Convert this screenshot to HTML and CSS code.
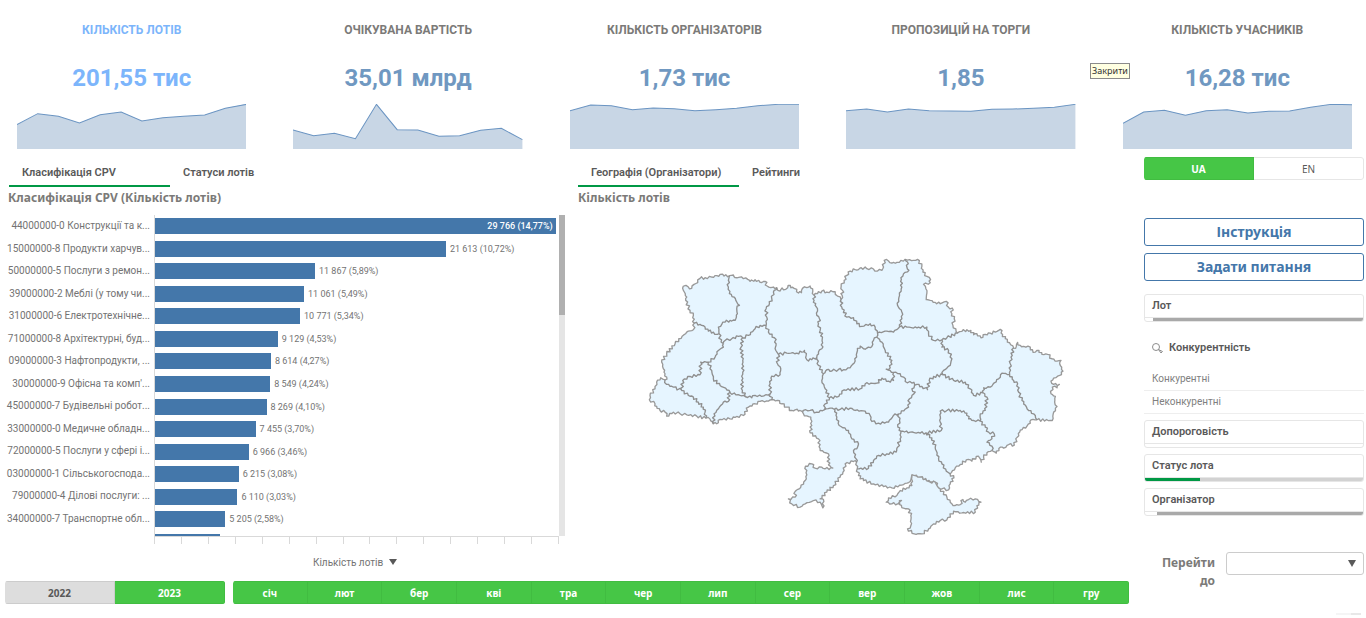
FILE: index.html
```
<!DOCTYPE html>
<html lang="uk">
<head>
    <meta charset="UTF-8">
    <meta name="viewport" content="width=device-width, initial-scale=1.0">
    <title>Аналітика закупівель</title>
    <link rel="stylesheet" href="styles.css">
</head>

<body>

<!-- Section: KPI cards -->
<header class="kpis">
    <section class="kpi active">
        <h2>КІЛЬКІСТЬ ЛОТІВ</h2>
        <p class="kpi-value">201,55 тис</p>
        <svg class="spark" viewBox="0 0 687 135" preserveAspectRatio="none" aria-hidden="true">
            <path class="area" d="M0 62L62 29L124 37L187 57L249 32L312 24L374 51L437 41L499 37L562 33L624 13L687 0V135H0Z"/>
            <path class="line" d="M0 62L62 29L124 37L187 57L249 32L312 24L374 51L437 41L499 37L562 33L624 13L687 1"/>
        </svg>
    </section>
    <section class="kpi">
        <h2>ОЧІКУВАНА ВАРТІСТЬ</h2>
        <p class="kpi-value">35,01 млрд</p>
        <svg class="spark" viewBox="0 0 687 135" preserveAspectRatio="none" aria-hidden="true">
            <path class="area" d="M0 78L62 95L124 88L187 104L250 1L312 77L374 78L437 97L499 95L562 79L624 73L687 107V135H0Z"/>
            <path class="line" d="M0 78L62 95L124 88L187 104L250 1L312 77L374 78L437 97L499 95L562 79L624 73L687 107"/>
        </svg>
    </section>
    <section class="kpi">
        <h2>КІЛЬКІСТЬ ОРГАНІЗАТОРІВ</h2>
        <p class="kpi-value">1,73 тис</p>
        <svg class="spark" viewBox="0 0 687 135" preserveAspectRatio="none" aria-hidden="true">
            <path class="area" d="M0 20L62 3L124 5L187 17L249 12L312 14L374 20L437 17L499 13L562 5L624 1L687 1V135H0Z"/>
            <path class="line" d="M0 20L62 3L124 5L187 17L249 12L312 14L374 20L437 17L499 13L562 5L624 1L687 1"/>
        </svg>
    </section>
    <section class="kpi">
        <h2>ПРОПОЗИЦІЙ НА ТОРГИ</h2>
        <p class="kpi-value">1,85</p>
        <svg class="spark" viewBox="0 0 687 135" preserveAspectRatio="none" aria-hidden="true">
            <path class="area" d="M0 20L62 15L124 24L187 15L249 20L312 21L374 22L437 16L499 15L562 13L624 10L687 1V135H0Z"/>
            <path class="line" d="M0 20L62 15L124 24L187 15L249 20L312 21L374 22L437 16L499 15L562 13L624 10L687 1"/>
        </svg>
    </section>
    <section class="kpi">
        <h2>КІЛЬКІСТЬ УЧАСНИКІВ</h2>
        <p class="kpi-value">16,28 тис</p>
        <svg class="spark" viewBox="0 0 687 135" preserveAspectRatio="none" aria-hidden="true">
            <path class="area" d="M0 58L62 24L124 19L187 34L249 20L312 17L374 27L437 22L499 21L562 10L624 1L687 2V135H0Z"/>
            <path class="line" d="M0 58L62 24L124 19L187 34L249 20L312 17L374 27L437 22L499 21L562 10L624 1L687 2"/>
        </svg>
    </section>
    <span class="tooltip" role="tooltip">Закрити</span>
</header>

<div class="layout">
    <main>
        <div class="panels">
            <!-- Section: CPV bar chart -->
            <section class="panel">
                <nav class="tabs">
                    <button class="tab selected" type="button">Класифікація CPV</button>
                    <button class="tab" type="button">Статуси лотів</button>
                </nav>
                <h3>Класифікація CPV (Кількість лотів)</h3>
                <div class="chart">
                    <ul class="bars">
                        <li><span class="name">44000000-0 Конструкції та к...</span><span class="track"><span class="bar" style="width: 99.2%"><b>29 766 (14,77%)</b></span></span></li>
                        <li><span class="name">15000000-8 Продукти харчув...</span><span class="track"><span class="bar" style="width: 72%"></span><span class="num">21 613 (10,72%)</span></span></li>
                        <li><span class="name">50000000-5 Послуги з ремон...</span><span class="track"><span class="bar" style="width: 39.6%"></span><span class="num">11 867 (5,89%)</span></span></li>
                        <li><span class="name">39000000-2 Меблі (у тому чи...</span><span class="track"><span class="bar" style="width: 36.9%"></span><span class="num">11 061 (5,49%)</span></span></li>
                        <li><span class="name">31000000-6 Електротехнічне...</span><span class="track"><span class="bar" style="width: 35.9%"></span><span class="num">10 771 (5,34%)</span></span></li>
                        <li><span class="name">71000000-8 Архітектурні, буд...</span><span class="track"><span class="bar" style="width: 30.4%"></span><span class="num">9 129 (4,53%)</span></span></li>
                        <li><span class="name">09000000-3 Нафтопродукти, ...</span><span class="track"><span class="bar" style="width: 28.7%"></span><span class="num">8 614 (4,27%)</span></span></li>
                        <li><span class="name">30000000-9 Офісна та комп'...</span><span class="track"><span class="bar" style="width: 28.5%"></span><span class="num">8 549 (4,24%)</span></span></li>
                        <li><span class="name">45000000-7 Будівельні робот...</span><span class="track"><span class="bar" style="width: 27.6%"></span><span class="num">8 269 (4,10%)</span></span></li>
                        <li><span class="name">33000000-0 Медичне обладн...</span><span class="track"><span class="bar" style="width: 24.9%"></span><span class="num">7 455 (3,70%)</span></span></li>
                        <li><span class="name">72000000-5 Послуги у сфері і...</span><span class="track"><span class="bar" style="width: 23.2%"></span><span class="num">6 966 (3,46%)</span></span></li>
                        <li><span class="name">03000000-1 Сільськогоспода...</span><span class="track"><span class="bar" style="width: 20.7%"></span><span class="num">6 215 (3,08%)</span></span></li>
                        <li><span class="name">79000000-4 Ділові послуги: ...</span><span class="track"><span class="bar" style="width: 20.4%"></span><span class="num">6 110 (3,03%)</span></span></li>
                        <li><span class="name">34000000-7 Транспортне обл...</span><span class="track"><span class="bar" style="width: 17.4%"></span><span class="num">5 205 (2,58%)</span></span></li>
                        <li><span class="name"></span><span class="track"><span class="bar" style="width: 16%"></span></span></li>
                    </ul>
                    <div class="scrollbar"><div class="thumb"></div></div>
                </div>
                <div class="ticks">
                    <i></i><i></i><i></i><i></i><i></i><i></i><i></i><i></i><i></i><i></i><i></i><i></i><i></i><i></i><i></i>
                </div>
                <button class="measure" type="button">Кількість лотів
                    <svg width="8" height="6" viewBox="0 0 8 6" aria-hidden="true"><path d="M0 0H8L4 6Z"/></svg>
                </button>
            </section>

            <!-- Section: map of regions -->
            <section class="panel">
                <nav class="tabs">
                    <button class="tab selected" type="button">Географія (Організатори)</button>
                    <button class="tab" type="button">Рейтинги</button>
                </nav>
                <h3>Кількість лотів</h3>
                <svg class="map" viewBox="0 0 1280 880" role="img" aria-label="Карта областей">
                    <!-- mainland -->
                    <path class="land" d="M130 117L138 115L145 120L155 124L162 112L173 107L180 94L195 92L215 90L230 86L240 82L252 87L268 86L280 84L285 92L296 91L310 95L323 97L330 103L345 98L360 106L375 103L381 117L392 122L400 120L410 122L413 130L420 132L426 123L437 127L444 115L452 122L462 124L470 127L475 138L484 137L487 124L500 122L510 117L518 132L522 145L532 140L545 132L560 135L572 131L585 134L592 147L603 157L606 145L607 130L603 118L612 100L620 85L630 72L645 68L655 68L663 62L680 65L700 66L712 72L725 70L730 60L732 40L745 42L755 48L770 46L782 40L795 37L808 38L820 40L832 37L845 58L848 75L860 88L871 98L870 107L850 112L857 125L860 138L858 158L870 160L885 166L900 170L918 163L924 180L936 183L935 200L942 215L938 235L952 258L965 253L980 248L992 250L1000 263L1010 260L1022 272L1035 262L1050 258L1065 255L1080 247L1087 262L1095 275L1108 287L1120 303L1128 298L1132 286L1140 295L1150 298L1163 297L1170 308L1185 315L1196 310L1205 322L1222 322L1235 335L1250 342L1262 340L1258 350L1268 372L1258 385L1240 393L1232 402L1240 412L1257 412L1250 422L1236 420L1232 440L1245 448L1243 465L1250 478L1240 495L1236 520L1190 518L1172 518L1170 528L1160 537L1140 549L1131 570L1122 594L1106 592L1090 603L1080 600L1068 618L1055 610L1040 617L1030 630L1023 645L1018 632L1008 628L995 642L990 638L978 638L960 652L945 662L930 680L941 692L930 710L925 728L905 725L895 722L885 705L870 705L840 690L815 683L810 703L790 712L755 722L730 718L700 710L670 700L655 685L651 665L649 645L640 643L615 650L612 670L600 690L580 715L560 735L540 755L550 757L548 782L540 765L520 760L495 770L480 780L455 770L445 755L465 750L465 733L482 720L495 700L500 683L496 657L515 650L525 663L545 660L555 665L578 663L565 653L565 620L540 610L535 575L510 557L515 535L512 510L500 506L490 500L490 490L475 492L465 488L455 490L440 480L425 470L412 460L395 458L385 462L360 463L345 470L325 480L310 505L290 508L270 515L240 517L230 530L220 530L210 516L197 513L170 507L140 503L120 500L100 495L80 507L75 495L60 490L50 478L45 470L28 458L30 445L45 425L50 405L62 392L75 398L80 390L75 380L70 365L65 345L80 320L105 290L140 255L160 248L163 228L158 212L160 205L150 190L137 160L140 150L130 130L130 117"/>
                    <!-- Crimea -->
                    <path class="land" d="M815 683L840 690L870 705L885 705L895 722L900 725L920 750L935 770L945 775L960 772L968 757L975 765L985 757L1005 755L1022 765L1010 775L1005 795L965 797L940 792L920 818L900 820L880 830L865 845L845 860L822 860L802 845L812 835L812 805L805 785L790 783L775 768L784 760L772 770L755 770L738 765L745 752L770 745L780 730L800 722L815 715L815 683"/>
                    <!-- region borders -->
                    <path class="border" d="M268 86L265 100L265 120L268 140L282 150L290 165L298 175L290 185L292 200L285 220L270 220L255 225L245 232L235 240L237 260
                        M163 228L180 232L195 240L205 252L220 255L232 262L237 260L243 285L250 290
                        M250 290L255 280L275 275L295 268L308 272L325 265L345 245L360 235L378 236
                        M410 122L400 135L395 155L388 170L378 185L380 210L378 236L385 255L403 272L408 290L405 305L415 322
                        M415 322L440 318L470 318L485 315L493 310L498 325L500 338L515 338L530 330
                        M522 145L522 160L525 175L532 185L530 205L538 215L535 230L540 250L547 270L545 305L535 315L530 330L535 355L550 380L545 400L555 425L568 452
                        M550 380L560 368L575 372L595 367L610 368L630 362L645 342L652 310L660 297L670 305L680 303L695 298L700 280L710 270
                        M603 157L605 180L620 210L640 212L650 230L665 238L690 230L705 240L712 258L710 270
                        M795 37L802 45L800 60L806 70L790 80L782 92L785 120L778 145L772 175L785 195L785 215L778 240
                        M712 258L740 252L760 255L778 240L800 240L820 243L835 240L860 240L865 260L880 280L905 278L920 272L952 258
                        M905 278L905 300L925 310L935 335L930 355L910 370L908 383
                        M710 270L725 285L735 310L755 340L750 362L738 366L760 376
                        M568 452L590 450L605 440L612 428L660 425L675 410L710 408L725 393L745 402L760 400L760 376
                        M760 376L780 380L790 390L795 403L815 408L830 412L845 418L862 428L867 400L880 388L908 383
                        M568 452L555 470L552 488L570 483L600 487L630 483L645 490L675 492L690 505L695 523L715 528L745 525L760 505L775 500
                        M490 490L510 490L530 495L552 488
                        M775 500L805 480L808 455L825 435L815 425L830 412
                        M775 500L778 520L773 540L782 552L780 575L772 600L768 615L740 620L715 625L700 640L685 663L651 665
                        M585 487L590 510L597 535L625 550L635 575L655 590L650 605L640 610L648 635L649 645
                        M782 552L810 555L840 558L857 557L903 550L900 525L900 492L920 490L960 490L980 498L985 515L1000 520L1020 522
                        M857 557L875 572L885 600L895 635L905 650L918 672L930 680
                        M908 383L940 400L975 405L990 425L1000 445L1028 437L1040 450L1035 490L1020 500L1020 522
                        M1028 437L1030 422L1050 420L1075 395L1085 378L1108 382
                        M1120 303L1112 330L1110 350L1108 382L1120 400L1132 410L1135 435L1145 460L1165 490L1180 500L1190 518
                        M1020 522L1035 540L1045 555L1062 560L1055 575L1040 585L1055 597L1055 610
                        M75 398L80 412L100 420L125 430L128 400L150 388L180 383L182 345L205 345L225 330L235 310L250 300L250 290
                        M125 430L145 445L160 450L175 465L190 480L195 495L197 513
                        M205 345L215 370L220 395L240 415L267 430L265 463L250 465L235 485L222 500L220 530
                        M267 430L270 437L300 445L315 447L335 452L345 445L365 448L390 440L395 458
                        M308 272L303 300L308 340L308 375L305 400L307 430L318 450
                        M415 322L412 350L422 365L420 383L395 387L390 410L390 440"/>
                </svg>
            </section>
        </div>

        <!-- Section: period filters -->
        <div class="period">
            <div class="group years">
                <button class="off" type="button">2022</button>
                <button type="button">2023</button>
            </div>
            <div class="group months">
                <button type="button">січ</button>
                <button type="button">лют</button>
                <button type="button">бер</button>
                <button type="button">кві</button>
                <button type="button">тра</button>
                <button type="button">чер</button>
                <button type="button">лип</button>
                <button type="button">сер</button>
                <button type="button">вер</button>
                <button type="button">жов</button>
                <button type="button">лис</button>
                <button type="button">гру</button>
            </div>
        </div>
    </main>

    <!-- Section: filters -->
    <aside>
        <div class="group lang">
            <button type="button">UA</button>
            <button class="plain" type="button">EN</button>
        </div>
        <div class="links">
            <a href="#">Інструкція</a>
            <a href="#">Задати питання</a>
        </div>
        <button class="filter" type="button">Лот<span class="state"><span class="excluded" style="width: 96.5%"></span></span></button>
        <div class="listbox">
            <h4>
                <svg width="11" height="11" viewBox="0 0 11 11" aria-hidden="true"><circle cx="4" cy="4" r="3.5"/><path d="M6.5 6.5L9 10L10.5 8.5Z"/></svg>
                Конкурентність
            </h4>
            <ul>
                <li>Конкурентні</li>
                <li>Неконкурентні</li>
            </ul>
        </div>
        <div class="filters">
            <button class="filter" type="button">Допороговість<span class="state"></span></button>
            <button class="filter" type="button">Статус лота<span class="state possible"><span class="chosen" style="width: 25%"></span></span></button>
            <button class="filter" type="button">Організатор<span class="state"><span class="excluded" style="width: 94.5%"></span></span></button>
        </div>
        <div class="goto">
            <label for="goto">Перейти до</label>
            <div class="select">
                <select id="goto"><option></option></select>
                <svg width="8" height="7" viewBox="0 0 8 7" aria-hidden="true"><path d="M0 0H8L4 7Z"/></svg>
            </div>
        </div>
        <div class="handle"></div>
    </aside>
</div>

<script>
    // Split every border segment into short steps and nudge them sideways,
    // so that the borders look like surveyed lines
    function roughen(line) {
        const points = line.trim().split('L').map(p => p.trim().split(' ').map(Number));
        let d = 'M' + points[0].join(' ');
        for (let i = 1; i < points.length; i++) {
            const [x1, y1] = points[i - 1];
            const [x2, y2] = points[i];
            const length = Math.hypot(x2 - x1, y2 - y1);
            const steps = Math.max(1, Math.round(length / 6));
            for (let s = 1; s < steps; s++) {
                const t = s / steps;
                const shift = Math.sin((x1 * 13 + y1 * 7 + s * 29) * 12.9) * 4;
                const x = x1 + (x2 - x1) * t - (y2 - y1) / length * shift;
                const y = y1 + (y2 - y1) * t + (x2 - x1) / length * shift;
                d += `L${x.toFixed(1)} ${y.toFixed(1)}`;
            }
            d += `L${x2} ${y2}`;
        }
        return d;
    }

    document.querySelectorAll('.map path').forEach(path => {
        const lines = path.getAttribute('d').split('M').slice(1);
        path.setAttribute('d', lines.map(roughen).join(''));
    });
</script>

</body>
</html>
```
FILE: styles.css
```
* {
    box-sizing: border-box;
}

body {
    font-family: "Noto Sans", "Open Sans", sans-serif;
    font-size: 11px;
    margin: 0;
    background-color: white;
    color: #595959;
}

h2, h3, h4, p, ul {
    margin: 0;
    padding: 0;
}

ul {
    list-style: none;
}

button, select {
    font-family: inherit;
    font-size: inherit;
    color: inherit;
    cursor: pointer;
}

/* KPI cards */
.kpis {
    position: relative;
    display: grid;
    grid-template-columns: repeat(5, 1fr);
    gap: 47px;
    padding: 21px 14px 0 17px;
}

.kpi {
    text-align: center;
    color: #7b7a78;
}

.kpi h2 {
    font-family: Roboto, sans-serif;
    font-size: 12px;
    line-height: 18px;
}

.kpi-value {
    font-family: Roboto, sans-serif;
    font-size: 24px;
    font-weight: bold;
    line-height: 30px;
    margin: 24px 0 11px;
    color: #7098c1;
}

.kpi.active,
.kpi.active .kpi-value {
    color: #7cb5fb;
}

.spark {
    display: block;
    width: 100%;
    height: 45px;
}

.area {
    fill: #c8d6e5;
}

.line {
    fill: none;
    stroke: #6a94c2;
    stroke-width: 3;
}

.tooltip {
    position: absolute;
    top: 63px;
    right: 236px;
    width: 40px;
    border: 1px solid #8a8a8a;
    background-color: #ffffe1;
    color: #333;
    font-size: 9px;
    line-height: 14px;
    text-align: center;
}

/* Page columns */
.layout {
    display: grid;
    grid-template-columns: 1fr 220px;
    gap: 15px;
    padding: 8px 2px 0 5px;
}

.panels {
    display: grid;
    grid-template-columns: 560px 1fr;
    gap: 13px;
}

.tabs {
    display: flex;
    padding-left: 4px;
}

.panel + .panel .tabs {
    padding-left: 0;
}

.tab {
    height: 30px;
    padding: 2px 14px 0 13px;
    border: none;
    border-bottom: 2px solid transparent;
    background: none;
    font-family: Roboto, sans-serif;
    font-weight: 600;
    text-align: left;
}

.tab.selected {
    width: 161px;
    border-bottom-color: #009845;
}

.panel h3 {
    font-size: 12px;
    line-height: 22px;
    color: #7b7a78;
    padding-left: 3px;
}

.panel + .panel h3 {
    padding-left: 0;
}

/* Bar chart */
.chart {
    display: flex;
    height: 321px;
    margin-top: 6px;
    overflow: hidden;
}

.bars {
    flex: 1;
    height: 338px;
    display: grid;
    grid-template-rows: repeat(15, 1fr);
}

.bars li {
    display: grid;
    grid-template-columns: 149px 1fr;
    color: #737373;
    font-family: Roboto, sans-serif;
    font-size: 10px;
}

.name {
    padding-right: 4px;
    line-height: 21px;
    text-align: right;
    white-space: nowrap;
}

.track {
    display: flex;
    align-items: center;
    border-left: 1px solid #d9d9d9;
}

.bar {
    height: 16px;
    background-color: #4477aa;
    color: white;
    line-height: 16px;
    text-align: right;
}

.bar b {
    padding-right: 3px;
    font-size: 9px;
    font-weight: 500;
}

.num {
    padding-left: 4px;
    font-size: 9px;
    white-space: nowrap;
}

.scrollbar {
    width: 6px;
    background-color: #e5e5e5;
}

.thumb {
    height: 100px;
    background-color: #b0b0b0;
}

.ticks {
    display: grid;
    grid-template-columns: repeat(15, 1fr);
    height: 8px;
    margin: 0 6px 0 149px;
    border: solid #d9d9d9;
    border-width: 1px 0 0 1px;
}

.ticks i {
    border-right: 1px solid #d9d9d9;
}

.measure {
    display: flex;
    align-items: center;
    gap: 6px;
    height: 20px;
    margin: 8px auto 0 308px;
    padding: 0;
    border: none;
    background: none;
    font-family: Roboto, sans-serif;
    font-size: 10px;
    color: #737373;
}

.measure svg,
.select svg {
    fill: #595959;
}

/* Map */
.map {
    display: block;
    width: 427px;
    max-width: 80%;
    margin: 38px 0 0 62px;
}

.land {
    fill: #e6f5ff;
    stroke: #999;
    stroke-width: 4;
    stroke-linejoin: round;
}

.border {
    fill: none;
    stroke: #8f8f8f;
    stroke-width: 4;
    stroke-linejoin: round;
}

/* Button groups */
.period {
    display: grid;
    grid-template-columns: 220px 1fr;
    gap: 8px;
    margin-top: 9px;
}

.group {
    display: flex;
    height: 23px;
    border-radius: 3px;
    overflow: hidden;
}

.group button {
    flex: 1;
    padding: 0;
    border: 1px solid #41bc41;
    border-left-width: 0;
    background-color: #46c646;
    color: white;
    font-size: 10px;
    font-weight: bold;
}

.group .off {
    background-color: #ddd;
    border-color: #ccc;
    color: #595959;
}

.group .plain {
    background-color: white;
    border-color: #e6e6e6;
    border-radius: 0 3px 3px 0;
    color: #595959;
    font-weight: normal;
}

/* Sidebar */
.links {
    display: grid;
    gap: 7px;
    margin: 38px 0 13px;
}

.links a {
    border: 1px solid #4477aa;
    border-radius: 3px;
    color: #4477aa;
    font-size: 14px;
    font-weight: bold;
    line-height: 26px;
    text-align: center;
    text-decoration: none;
}

.filter {
    display: flex;
    flex-direction: column;
    justify-content: space-between;
    align-items: flex-start;
    width: 100%;
    height: 28px;
    padding: 0;
    border: 1px solid #e6e6e6;
    border-radius: 3px;
    background-color: white;
    overflow: hidden;
    font-family: Roboto, sans-serif;
    font-weight: 600;
    line-height: 22px;
    text-indent: 7px;
}

.state {
    display: flex;
    width: 100%;
    height: 4px;
    border-top: 1px solid #e6e6e6;
}

.state.possible {
    background-color: #d2d2d2;
}

.excluded {
    margin-left: auto;
    background-color: #a9a9a9;
}

.chosen {
    background-color: #009845;
}

.listbox {
    padding: 15px 0 6px;
}

.listbox h4 {
    display: flex;
    align-items: center;
    gap: 6px;
    padding: 0 8px;
    font-family: Roboto, sans-serif;
    font-size: 11px;
    font-weight: 600;
    line-height: 22px;
}

.listbox h4 svg {
    fill: none;
    stroke: #8c8c8c;
}

.listbox ul {
    padding-top: 9px;
}

.listbox li {
    padding: 0 8px;
    border-bottom: 1px solid #eee;
    color: #808080;
    font-family: Roboto, sans-serif;
    font-size: 10px;
    line-height: 22px;
}

.filters {
    display: grid;
    gap: 6px;
}

.goto {
    display: flex;
    justify-content: flex-end;
    gap: 11px;
    margin-top: 36px;
}

.goto label {
    width: 60px;
    color: #7b7a78;
    font-size: 12px;
    font-weight: bold;
    line-height: 18px;
    text-align: right;
    padding-top: 2px;
}

.select {
    position: relative;
    width: 138px;
}

.select select {
    width: 100%;
    height: 23px;
    border: 1px solid #ccc;
    border-radius: 3px;
    background-color: white;
    appearance: none;
}

.select svg {
    position: absolute;
    top: 8px;
    right: 8px;
    pointer-events: none;
}

.handle {
    width: 25px;
    height: 2px;
    margin: 23px 3px 0 auto;
    background: linear-gradient(to right, #f5f5f5 60%, #e8e8e8 60%);
}
```
